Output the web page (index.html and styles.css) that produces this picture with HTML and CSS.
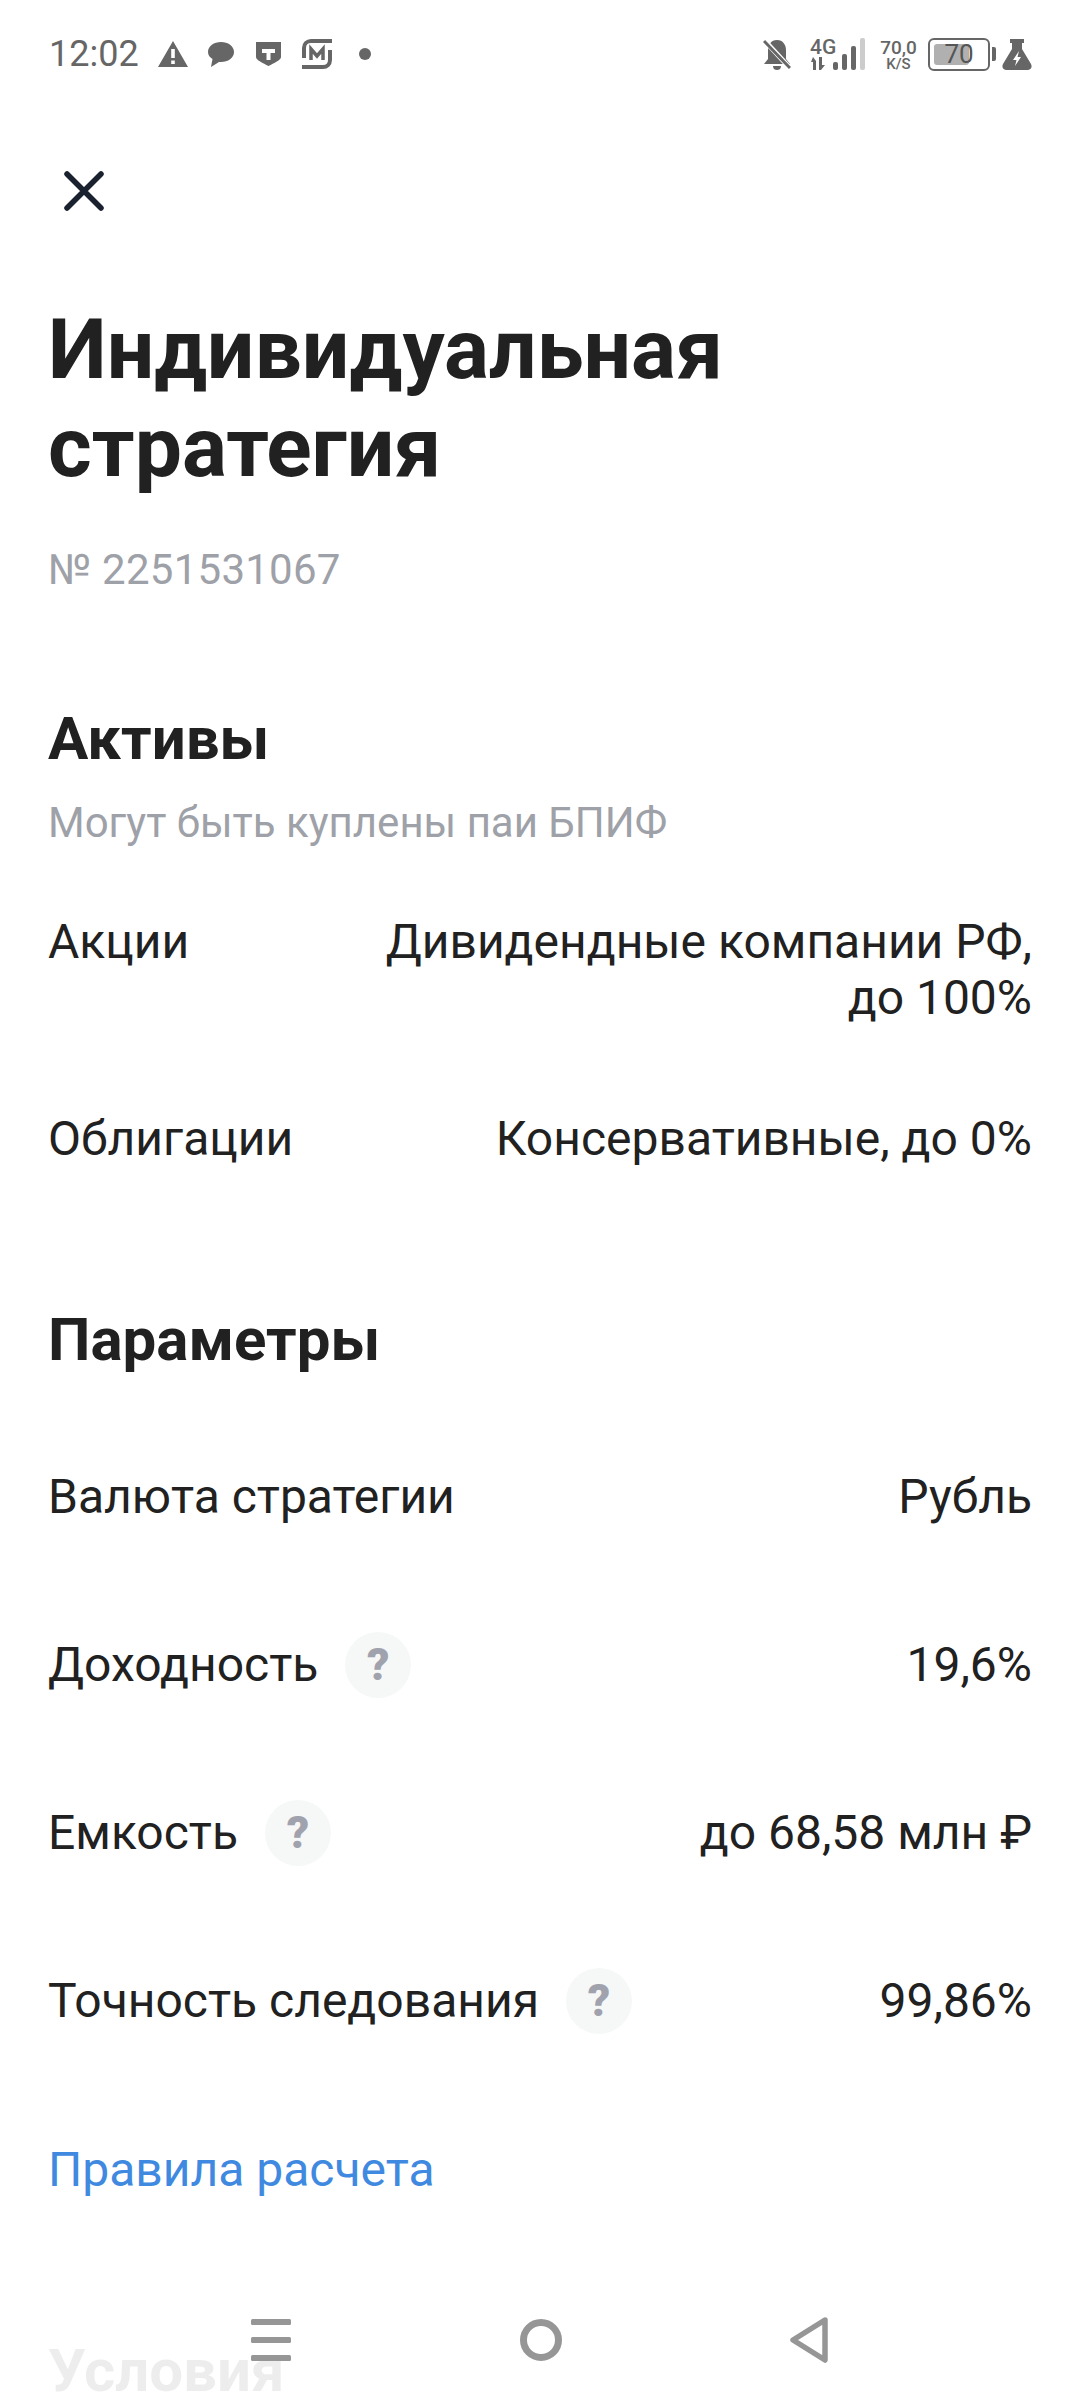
FILE: index.html

```html
<!DOCTYPE html>
<html lang="ru">
<head>
  <meta charset="UTF-8" />
  <meta name="viewport" content="width=device-width, initial-scale=1.0" />
  <title>Индивидуальная стратегия</title>
  <link rel="stylesheet" href="styles.css">
</head>
<body>
  <div class="screen">
    <div class="status-bar">
      <div class="status-left">
        <span class="clock">12:02</span>
        <svg width="30" height="26" viewBox="0 0 30 26"><path fill="#666" fill-rule="evenodd" d="M15 0 L30 26 H0 Z M13.2 8 V17 H16.8 V8 Z M13.2 19.5 V23 H16.8 V19.5 Z"/></svg>
        <svg class="icon-chat" width="26" height="25" viewBox="0 0 26 25"><path fill="#666" d="M13 0 C20 0 26 4 26 10 C26 16 20 20 13 20 L11 20 L3 25 L4.5 17 C1.5 15 0 13 0 10 C0 4 6 0 13 0 Z"/></svg>
        <svg class="icon-shield" width="25" height="24" viewBox="0 0 25 24"><path fill="#666" fill-rule="evenodd" d="M0 0 H25 V15 C25 18 18 21 12.5 24 C7 21 0 18 0 15 Z M6 7 V11 H10.5 V18 H14.5 V11 H19 V7 Z"/></svg>
        <svg class="icon-market" width="30" height="30" viewBox="0 0 30 30"><path fill="none" stroke="#666" stroke-width="4" d="M30 2 H9 C5 2 2 5 2 9 V19 M0 28 H21 C25 28 28 25 28 21 V11"/><path fill="none" stroke="#666" stroke-width="3.5" d="M9 21 V10 L15 17 L21 10 V21"/></svg>
        <span class="dot"></span>
      </div>
      <div class="status-right">
        <svg width="28" height="31" viewBox="0 0 28 31"><path fill="#666" d="M14 1 C20 1 23 6 23 11 V20 L27 25 H1 L5 20 V11 C5 6 8 1 14 1 Z M10 27 H18 C18 30 16 31 14 31 C12 31 10 30 10 27 Z"/><path stroke="#fff" stroke-width="5" d="M1 1 L27 29"/><path stroke="#666" stroke-width="3" d="M1 2 L27 29"/></svg>
        <div class="net">
          <span class="net-type">4G</span>
          <svg width="16" height="13" viewBox="0 0 16 13"><path fill="#666" d="M3 0 L6 4 V13 H3 V5 H1 Z M9 0 H12 V8 H15 L11 13 H9 Z"/></svg>
        </div>
        <svg width="32" height="32" viewBox="0 0 32 32"><rect x="0" y="24" width="5" height="8" rx="2" fill="#666"/><rect x="9" y="16" width="5" height="16" rx="2" fill="#666"/><rect x="18" y="8" width="5" height="24" rx="2" fill="#666"/><rect x="27" y="0" width="5" height="32" rx="2" fill="#ccc"/></svg>
        <div class="speed"><span>70,0</span><span class="speed-unit">K/S</span></div>
        <div class="battery">
          <div class="battery-body">
            <div class="battery-level"></div>
            <span class="battery-text">70</span>
          </div>
          <span class="battery-tip"></span>
        </div>
        <svg class="icon-flask" width="30" height="31" viewBox="0 0 30 31"><path fill="#666" fill-rule="evenodd" d="M8 0 H22 V4 H20 V10 L29 25 C30.5 28 29 31 26 31 H4 C1 31 -0.5 28 1 25 L10 10 V4 H8 Z M17 12 L11 21 H14.5 L13 27 L19 18 H15.5 Z"/></svg>
      </div>
    </div>

    <div class="close-row">
      <svg width="40" height="40" viewBox="0 0 40 40"><path d="M3 3 L37 37 M37 3 L3 37" stroke="#1a2230" stroke-width="5.5" stroke-linecap="round"/></svg>
    </div>

    <main class="content">
      <h1 class="title">Индивидуальная стратегия</h1>
      <div class="number">№ 2251531067</div>

      <h2 class="section-title assets-title">Активы</h2>
      <p class="section-note">Могут быть куплены паи БПИФ</p>
      <div class="row row-assets">
        <span class="row-label">Акции</span>
        <span class="row-value">Дивидендные компании РФ, до 100%</span>
      </div>
      <div class="row row-assets-last">
        <span class="row-label">Облигации</span>
        <span class="row-value">Консервативные, до 0%</span>
      </div>

      <h2 class="section-title params-title">Параметры</h2>
      <div class="params">
        <div class="row param">
          <span class="row-label">Валюта стратегии</span>
          <span class="row-value">Рубль</span>
        </div>
        <div class="row param">
          <span class="row-label">Доходность <span class="hint">?</span></span>
          <span class="row-value">19,6%</span>
        </div>
        <div class="row param">
          <span class="row-label">Емкость <span class="hint">?</span></span>
          <span class="row-value">до 68,58 млн ₽</span>
        </div>
        <div class="row param">
          <span class="row-label">Точность следования <span class="hint">?</span></span>
          <span class="row-value">99,86%</span>
        </div>
      </div>
      <a class="link" href="#">Правила расчета</a>

      <h2 class="section-title terms-title">Условия</h2>
    </main>

    <nav class="nav-bar">
      <svg width="40" height="42" viewBox="0 0 40 42"><rect x="0" y="0" width="40" height="6" rx="1.5" fill="#969696"/><rect x="0" y="18" width="40" height="6" rx="1.5" fill="#969696"/><rect x="0" y="36" width="40" height="6" rx="1.5" fill="#969696"/></svg>
      <svg width="42" height="42" viewBox="0 0 42 42"><circle cx="21" cy="21" r="17.5" fill="none" stroke="#969696" stroke-width="7"/></svg>
      <svg width="38" height="46" viewBox="0 0 38 46"><path d="M35 3 L3 23 L35 43 Z" fill="none" stroke="#969696" stroke-width="5.5" stroke-linejoin="round"/></svg>
    </nav>
  </div>
</body>
</html>
```

FILE: styles.css

```css
* {
    box-sizing: border-box;
}

html, body {
    margin: 0;
    padding: 0;
    background-color: #ffffff;
}

body {
    font-family: Roboto, "Noto Sans", sans-serif;
    color: #212121;
}

.screen {
    position: relative;
    width: 1080px;
    height: 2400px;
    overflow: hidden;
}

/* status bar */
.status-bar {
    height: 108px;
    padding: 0 48px 0 49px;
    display: flex;
    justify-content: space-between;
    align-items: center;
}

.status-left {
    display: flex;
    align-items: center;
}

.clock {
    width: 87px;
    margin-right: 22px;
    font-size: 36px;
    color: #666666;
}

.icon-chat {
    margin-left: 20px;
}

.icon-shield {
    margin-left: 22px;
}

.icon-market {
    margin-left: 21px;
}

.dot {
    width: 12px;
    height: 12px;
    margin-left: 27px;
    border-radius: 50%;
    background-color: #666666;
}

.status-right {
    display: flex;
    align-items: center;
    color: #666666;
}

.net {
    width: 23px;
    margin-left: 19px;
    display: flex;
    flex-direction: column;
    align-items: flex-start;
}

.net-type {
    font-size: 21px;
    line-height: 19px;
    font-weight: 500;
}

.speed {
    width: 37px;
    margin-left: 15px;
    display: flex;
    flex-direction: column;
    align-items: center;
    font-size: 19px;
    line-height: 19px;
    font-weight: 500;
}

.speed-unit {
    font-size: 15px;
    line-height: 14px;
}

.battery {
    margin-left: 11px;
    display: flex;
    align-items: center;
}

.battery-body {
    position: relative;
    width: 62px;
    height: 33px;
    border: 2px solid #666666;
    border-radius: 6px;
    text-align: center;
}

.battery-level {
    position: absolute;
    left: 4px;
    top: 4px;
    bottom: 4px;
    width: 35px;
    border-radius: 3px;
    background-color: #b0b0b0;
}

.battery-text {
    position: relative;
    font-size: 26px;
    line-height: 29px;
    color: #555555;
}

.battery-tip {
    width: 4px;
    height: 14px;
    margin-left: 2px;
    background-color: #666666;
    border-radius: 0 2px 2px 0;
}

.icon-flask {
    margin-left: 6px;
}

/* close */
.close-row {
    height: 166px;
    padding-left: 64px;
    display: flex;
    align-items: center;
}

/* content */
.content {
    padding: 0 48px;
}

.title {
    margin: 27px 0 0;
    width: 800px;
    font-size: 84px;
    line-height: 98px;
    font-weight: 700;
}

.number {
    margin-top: 45px;
    font-size: 42px;
    line-height: 56px;
    letter-spacing: 0.25px;
    color: #9ea1a8;
}

.section-title {
    margin: 0;
    font-size: 60px;
    line-height: 72px;
    font-weight: 700;
}

.assets-title {
    margin-top: 105px;
}

.section-note {
    margin: 20px 0 0;
    font-size: 42px;
    line-height: 56px;
    color: #9ea1a8;
}

.row {
    display: flex;
    justify-content: space-between;
    font-size: 48px;
    line-height: 56px;
}

.row-label {
    display: flex;
    align-items: center;
    flex-shrink: 0;
    height: 56px;
}

.row-value {
    text-align: right;
}

.row-assets {
    margin-top: 63px;
}

.row-assets .row-value {
    width: 680px;
}

.row-assets-last {
    margin-top: 85px;
}

.params-title {
    margin-top: 137px;
}

.params {
    margin-top: 37px;
}

.param {
    height: 168px;
    align-items: center;
}

.hint {
    width: 66px;
    height: 66px;
    margin-left: 27px;
    border-radius: 50%;
    background-color: #f6f7f7;
    color: #a0a3ad;
    font-size: 44px;
    font-weight: 900;
    display: flex;
    align-items: center;
    justify-content: center;
}

.link {
    display: block;
    margin-top: 57px;
    font-size: 48px;
    line-height: 56px;
    color: #3f8ae0;
    text-decoration: none;
}

.terms-title {
    margin-top: 137px;
}

/* bottom nav over the page */
.nav-bar {
    position: absolute;
    left: 0;
    right: 0;
    bottom: 0;
    height: 130px;
    padding: 10px 252px 0 251px;
    background-color: rgba(255, 255, 255, 0.92);
    display: flex;
    justify-content: space-between;
    align-items: center;
}
```
